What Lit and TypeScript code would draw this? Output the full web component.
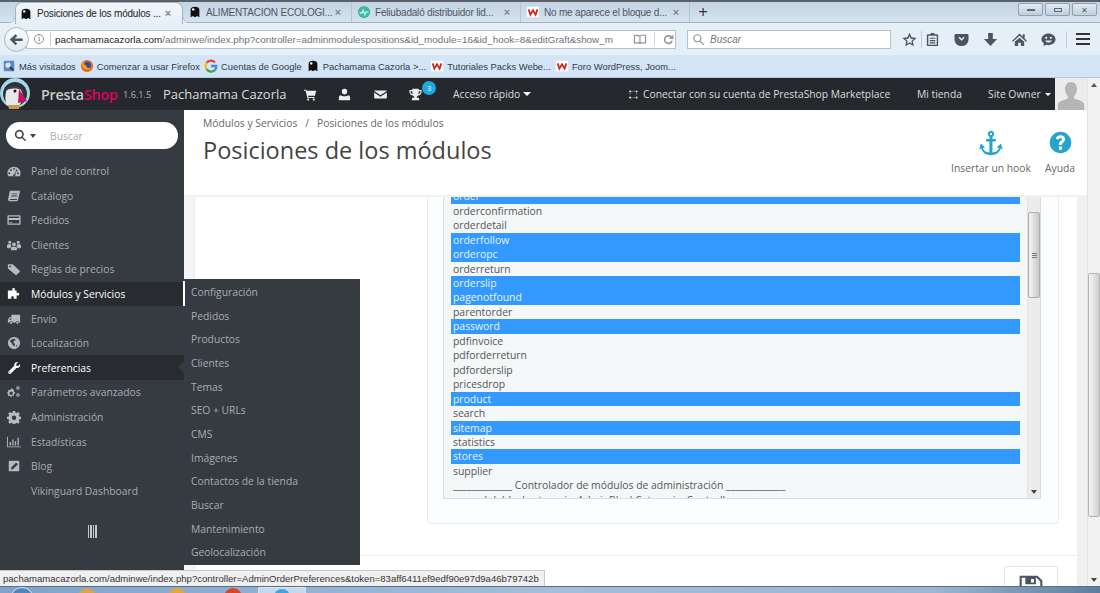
import { LitElement, html, css, svg } from "lit";
import { customElement } from "lit/decorators.js";

const ic = (d: string, s = 14, cls = "") =>
  html`<svg class=${cls} width=${s} height=${s} viewBox="0 0 16 16" fill="currentColor" fill-rule="evenodd"><path d=${d}></path></svg>`;

const P: Record<string, string> = {
  dash: "M8 3a7.5 7.5 0 0 0-7.5 7.500c0 1.500.4 2.700 1.100 3.500h12.800c.7-.8 1.100-2 1.100-3.500A7.500 7.500 0 0 0 8 3zM3.500 10.500a1 1 0 1 1 0-.1zM5.500 7a1 1 0 1 1 0-.1zM9 5.500a1 1 0 1 1 0-.1zM12 7.500a1 1 0 1 1 0-.1zM13.500 10.500a1 1 0 1 1 0-.1zM7 12.500a1.300 1.300 0 1 0 2.500 0l.8-4.500-2 3.800-1.300.7z",
  book: "M4 2h10c.7 0 1 .5.8 1.200l-2.300 9.300c-.2.8-.7 1.500-1.700 1.500H3c-1.300 0-2-1-1.700-2.200L3 3c.1-.6.5-1 1-1zM5.500 5l-.3 1h6.500l.3-1zM5 7.500l-.3 1h6.500l.3-1zM3.500 11.500c-.3.8 0 1.200.5 1.200h6.700c.3 0 .5-.2.6-.5l.1-.7z",
  card: "M1.500 2.500h13c.6 0 1 .4 1 1v9c0 .6-.4 1-1 1h-13c-.6 0-1-.4-1-1v-9c0-.6.4-1 1-1zM2 4v1.800h12V4zM2 8v4h12V8zM3 10.500h3v.8H3z",
  users: "M8 5a2.200 2.200 0 1 1 0 4.400A2.200 2.200 0 0 1 8 5zM3.200 3a1.800 1.800 0 1 1 0 3.600 1.800 1.800 0 0 1 0-3.600zM12.800 3a1.800 1.800 0 1 1 0 3.600 1.800 1.800 0 0 1 0-3.600zM0 8.500C0 7.500 1 7 3.200 7c.5 0 1 .1 1.300.2-.2 1 .2 2 .9 2.500-1 .4-1.500 1-1.700 2H1c-.6 0-1-.4-1-1zM16 8.500c0-1-1-1.500-3.200-1.500-.5 0-1 .1-1.300.2.2 1-.2 2-.9 2.500 1 .4 1.500 1 1.700 2H15c.6 0 1-.4 1-1zM4.500 12c0-1.300 1-2 3.500-2s3.500.7 3.500 2v1.200c0 .5-.3.800-.8.800H5.300c-.5 0-.8-.3-.8-.8z",
  tag: "M1 2.500h5.500l8 7.500c.5.5.5 1 0 1.500l-3.500 3c-.5.5-1 .5-1.500 0L1 7.500zM3.500 4a1 1 0 1 0 0 2 1 1 0 0 0 0-2z",
  puzzle: "M6 2.500c0-1 .7-1.500 1.500-1.500S9 1.500 9 2.500c0 .6-.3 1-.3 1.500H11v3c.5 0 .9-.3 1.500-.3 1 0 1.500.7 1.500 1.500s-.5 1.500-1.500 1.500c-.6 0-1-.3-1.500-.3v4.100H7.500c0-.5.3-.9.3-1.500 0-.9-.7-1.500-1.500-1.500s-1.500.6-1.500 1.500c0 .6.3 1 .3 1.500H1V4h5.300c0-.5-.3-.9-.3-1.500z",
  truck: "M5 3h10v9h-1.200a2 2 0 0 0-3.900 0H6.800a2 2 0 0 0-3.900 0H1V8.500L3 6h2zM3.800 7.300 2.500 8.800H5V7.300zM4.900 11a1.300 1.300 0 1 1 0 2.600 1.300 1.300 0 0 1 0-2.600zM11.900 11a1.300 1.300 0 1 1 0 2.600 1.300 1.300 0 0 1 0-2.600z",
  globe: "M8 1a7 7 0 1 1 0 14A7 7 0 0 1 8 1zM5 4c-.8.5-1.500 1.500-1.500 2.500l2 1.500 1 2.500L8.500 12l.5-3-2-2 1.500-1.500L10 4.500 8.500 3zM11 10l-1 2.500 2-1.500z",
  wrench: "M15 4.500c0 2.200-2 4-4.300 3.400L4.500 14.300c-.8.8-1.900.8-2.600.1-.8-.8-.7-1.900.1-2.700l6.300-6.200C7.700 3 9.500 1 11.700 1c.5 0 .8.100 1.100.2L10.500 3.500l.5 1.800 1.800.5 2-2.300c.1.300.2.600.2 1zM3.200 12.200a.6.600 0 1 0 0 1.200.6.600 0 0 0 0-1.200z",
  cogs: "M5.200 4l1 .1.400 1.200 1-.1.700.9-.6.900.6 1.100 1 .2v1.200l-1.100.3-.5 1 .5 1-.8.800-1-.5-1 .4-.3 1.100H4l-.3-1.100-1-.4-1 .5-.8-.8.500-1-.5-1L0 9.900V8.700l1-.2.500-1.100-.5-1 .8-.8 1 .5 1-.4.300-1zM4.700 7.300a2 2 0 1 0 0 4 2 2 0 0 0 0-4zM12.500 1.500a2 2 0 1 1 0 4 2 2 0 0 1 0-4zM12.500 2.700a.8.800 0 1 0 0 1.600.8.800 0 0 0 0-1.600zM12.500 9.500a2 2 0 1 1 0 4 2 2 0 0 1 0-4zM12.500 10.700a.8.800 0 1 0 0 1.600.8.800 0 0 0 0-1.600z",
  cog: "M6.700 1h2.600l.4 2 1.300.5L12.800 2.400l1.800 1.800-1.100 1.800.5 1.300 2 .4v2.600l-2 .4-.5 1.300 1.100 1.800-1.800 1.800-1.800-1.100-1.300.5-.4 2H6.700l-.4-2-1.300-.5-1.800 1.100-1.800-1.800 1.100-1.800-.5-1.300-2-.4V7.700l2-.4.500-1.300-1.100-1.800 1.800-1.800 1.800 1.100L6.300 3zM8 6.300a2.500 2.500 0 1 0 0 5 2.500 2.500 0 0 0 0-5z",
  chart: "M0 2h1v11h15v1H0zM3 8h1.500v4H3zM6 5h1.500v7H6zM9 7h1.500v5H9zM12 3h1.500v9H12z",
  edit: "M3 2h10c.6 0 1 .4 1 1v10c0 .6-.4 1-1 1H3c-.6 0-1-.4-1-1V3c0-.6.4-1 1-1zM10.500 4 5 9.500 4.500 12l2.500-.5L12.500 6z",
  cart: "M0 2h2.800l.5 1.500H15l-1.500 6H5l.4 1.500H13v1.300H4.200L2 3.300H0zM5 13a1.300 1.300 0 1 1 0 2.600A1.300 1.300 0 0 1 5 13zM12 13a1.300 1.300 0 1 1 0 2.600 1.300 1.300 0 0 1 0-2.600z",
  user: "M8 1a3.300 3.300 0 0 1 3.300 3.500c0 1.800-1.300 3.500-3.300 3.500S4.700 6.300 4.700 4.500A3.300 3.300 0 0 1 8 1zM3 9c1 0 1.700 1.300 5 1.300S12 9 13 9c1.200 0 2 2 2 4.500 0 .9-.6 1.500-1.500 1.500h-11C1.600 15 1 14.400 1 13.500 1 11 1.800 9 3 9z",
  mail: "M1 3h14c.5 0 .8.300.8.800L8 9 .2 3.800C.2 3.300.5 3 1 3zM.2 5.500 8 10.700l7.800-5.200V12c0 .6-.4 1-1 1H1.200c-.6 0-1-.4-1-1z",
  trophy: "M4 1h8v1.500h3.500V5c0 2.500-2 4-4.300 4.300-.5.700-1.200 1.200-1.700 1.400V12h1.500c1 0 1.500.7 1.500 1.500V15H3.500v-1.500c0-1 .7-1.500 1.500-1.500h1.500v-1.300c-.5-.2-1.200-.7-1.700-1.400C2.500 9 .5 7.500.5 5V2.500H4zM2 4v1c0 1.200.8 2.200 2.500 2.700C4.200 6.600 4 5.300 4 4zM14 4h-2c0 1.300-.2 2.600-.5 3.700C13.200 7.200 14 6.200 14 5z",
  search: "M6.500 1a5.500 5.500 0 0 1 4.400 8.800l4 4-1.200 1.200-4-4A5.500 5.500 0 1 1 6.500 1zM6.500 3a3.500 3.500 0 1 0 0 7 3.500 3.500 0 0 0 0-7z",
  star: "M8 .8l2.200 4.900 5.300.6-4 3.600 1.100 5.300L8 12.500l-4.600 2.700 1.100-5.300-4-3.600 5.300-.6zM8 4.300 6.800 7.200l-3 .3 2.200 2-.6 3L8 11l2.600 1.500-.6-3 2.200-2-3-.3z",
  clip: "M6 1h4v1.500h3c.6 0 1 .4 1 1V14c0 .6-.4 1-1 1H3c-.6 0-1-.4-1-1V3.500c0-.6.4-1 1-1h3zM3.500 4v9.500h9V4zM5 6h6v1.300H5zM5 8.500h6v1.300H5zM5 11h6v1.300H5z",
  pocket: "M2 2h12c.8 0 1.500.7 1.500 1.500V8A7.500 7 0 0 1 .5 8V3.500C.5 2.700 1.200 2 2 2zM4.800 6 8 9.200 11.200 6l-1-1L8 7.200 5.800 5z",
  down: "M5.500 1h5v6.500H15L8 15 1 7.500h4.500z",
  home: "M8 1.500 11.500 5V2.500h2v4.500L16 9.500l-1 1-7-6.500-7 6.500-1-1zM3 10.500 8 6l5 4.500V15H9.500v-3.500h-3V15H3z",
  smile: "M8 1.500c4 0 7.500 2.800 7.500 6.300s-3.500 6.200-7.500 6.200c-.7 0-1.500-.1-2-.3L2.500 15l.7-2.700C1.500 11.200.5 9.600.5 7.800.5 4.300 4 1.500 8 1.500zM5.500 5a1.200 1.200 0 1 0 0 2.400 1.200 1.200 0 0 0 0-2.400zM10.500 5a1.200 1.200 0 1 0 0 2.400 1.200 1.200 0 0 0 0-2.400zM4.500 9c.7 1.500 2 2.300 3.500 2.300s2.800-.8 3.500-2.300z",
  anchor: "M8 .5a2 2 0 0 1 .9 3.800V5.500H11v1.500H8.900v6.800c2-.2 3.500-1.200 4-2.800l-1.400-.4 2.700-2.300.9 3.500-1.100-.4C13.200 14 11 15.500 8 15.500S2.800 14 1.900 11.400l-1.100.4.9-3.500 2.700 2.300-1.400.4c.5 1.600 2 2.600 4 2.800V7H5V5.500h2.100V4.300A2 2 0 0 1 8 .5zM8 1.800a.7.700 0 1 0 0 1.400.7.700 0 0 0 0-1.400z",
  help: "M8 .5a7.500 7.500 0 1 1 0 15 7.500 7.500 0 0 1 0-15zM8 3C6.200 3 5 4 4.800 5.500l2 .4C7 5.200 7.400 4.800 8 4.800s1 .4 1 .9c0 .5-.4.8-1 1.300-.8.600-1.100 1.200-1.100 2v.7H9v-.5c0-.4.2-.6.800-1.100C10.600 7.400 11.200 6.800 11.200 5.600 11.200 4 9.800 3 8 3zM6.900 10.800V13H9v-2.200z",
  back: "M7 2.500 8.800 4.300 6 7h8.500v2.500H6l2.800 2.700L7 14 .8 8z",
  reload: "M8 2.500c1.500 0 2.900.6 3.900 1.600L14 2v5.500H8.500l2-2C9.800 4.800 9 4.400 8 4.400a3.700 3.700 0 1 0 3.500 4.900l1.800.6A5.600 5.600 0 1 1 8 2.500z",
  reader: "M1 3h5.500L8 4l1.500-1H15v10H9.500L8 14l-1.500-1H1zM2.300 4.300v7.400h5V5zM13.700 4.300H9.200l-.6.700v6.700h5.100z",
  magn: "M6.500 1.500a5 5 0 0 1 4 8l4.500 4.500-1 1-4.500-4.500a5 5 0 1 1-3-9zM6.500 2.800a3.700 3.700 0 1 0 0 7.400 3.700 3.700 0 0 0 0-7.400z",
  plug: "M3 5a1.500 1.500 0 1 1 0-3 1.500 1.500 0 0 1 0 3zM12.500 5a1.500 1.500 0 1 1 0-3 1.500 1.500 0 0 1 0 3zM3 14a1.500 1.500 0 1 1 0-3 1.500 1.500 0 0 1 0 3zM12.500 14a1.500 1.500 0 1 1 0-3 1.500 1.500 0 0 1 0 3zM5 3h1.500v1H5zM8 2.500h1.500v1H8zM2.500 6.500h1V8h-1zM12 6.500h1V8h-1zM5 12.500h1.500v1H5zM8.500 12h1.500v1H8.500z",
  disk: "M1 1h11l3 3v11H1zM2.300 2.300v11.400h11.400V4.600l-2.300-2.300H11v4H4.500v-4zM8 3v2.300h1.800V3zM4 9.500h8v4H4z",
  prsn: "M8 1c2 0 3.200 1.500 3.200 3.800 0 1.800-.7 3-1.500 3.700v1.300c1 .6 5.300 1.200 5.300 3.200v3H1v-3c0-2 4.300-2.600 5.300-3.200V8.500C5.500 7.800 4.800 6.600 4.800 4.800 4.800 2.500 6 1 8 1z",
};

const pf = svg`<path d="M3 14V5.500C3 3 5 2 8 2s5 1 5 3.500V14l-2.500-1.500L8 14l-2.500-1.500z" fill="#111"/><circle cx="6" cy="5" r="1.400" fill="#fff"/>`;
const fav = (k: string) => {
  if (k === "ps") return html`<svg width="14" height="16" viewBox="0 0 16 16">${pf}</svg>`;
  if (k === "w") return html`<svg width="14" height="16" viewBox="0 0 16 16"><rect x="1" y="2" width="14" height="12" fill="#fff"/><path d="M3 5l2 6 3-5 3 5 2-6" fill="none" stroke="#d3261c" stroke-width="2"/></svg>`;
  if (k === "fe") return html`<svg width="14" height="16" viewBox="0 0 16 16"><circle cx="8" cy="8" r="7" fill="#3bb8a6"/><path d="M3 9h3l1-3 2 5 1-3h3" fill="none" stroke="#dff" stroke-width="1.200"/></svg>`;
  if (k === "fx") return html`<svg width="14" height="16" viewBox="0 0 16 16"><circle cx="8" cy="8" r="7" fill="#e66a1f"/><circle cx="8.500" cy="7" r="3.800" fill="#2c4f9e"/><path d="M2 6c1 5 6 8 11 4-3 1-6 0-6-3-2 0-3-1-2-4C3 4 2 5 2 6z" fill="#f6a31c"/></svg>`;
  if (k === "g") return html`<svg width="14" height="16" viewBox="0 0 16 16" fill="none" stroke-width="2.600"><path d="M12.500 4A6 6 0 0 0 3 4.500" stroke="#ea4335"/><path d="M3 4.500a6 6 0 0 0 0 7" stroke="#fbbc05"/><path d="M3 11.500a6 6 0 0 0 9.500 1" stroke="#34a853"/><path d="M8 8h6a6 6 0 0 1-1.500 4.500" stroke="#4285f4"/></svg>`;
  return html`<svg width="14" height="16" viewBox="0 0 16 16"><rect x="2" y="2" width="12" height="12" rx="1" fill="#5b87c5"/><circle cx="7" cy="7" r="3" fill="#dce8f7"/><path d="M9 9l4 4" stroke="#233" stroke-width="2"/></svg>`;
};

const MENU: [string, string, string?][] = [
  ["dash", "Panel de control"], ["book", "Catálogo"], ["card", "Pedidos"], ["users", "Clientes"],
  ["tag", "Reglas de precios"], ["puzzle", "Módulos y Servicios", "on"], ["truck", "Envío"],
  ["globe", "Localización"], ["wrench", "Preferencias", "on cur"], ["cogs", "Parámetros avanzados"],
  ["cog", "Administración"], ["chart", "Estadísticas"], ["edit", "Blog"], ["", "Vikinguard Dashboard"],
];
const SUB = ["Configuración", "Pedidos", "Productos", "Clientes", "Temas", "SEO + URLs", "CMS", "Imágenes", "Contactos de la tienda", "Buscar", "Mantenimiento", "Geolocalización"];
const HOOKS: [string, boolean][] = [
  ["order", true], ["orderconfirmation", false], ["orderdetail", false], ["orderfollow", true], ["orderopc", true],
  ["orderreturn", false], ["orderslip", true], ["pagenotfound", true], ["parentorder", false], ["password", true],
  ["pdfinvoice", false], ["pdforderreturn", false], ["pdforderslip", false], ["pricesdrop", false], ["product", true],
  ["search", false], ["sitemap", true], ["statistics", false], ["stores", true], ["supplier", false],
  ["_____________ Controlador de módulos de administración _____________", false],
];
const TABS: [string, string, boolean][] = [
  ["ps", "Posiciones de los módulos ...", true],
  ["ps", "ALIMENTACIÓN ECOLÓGI...", false],
  ["fe", "Feliubadaló distribuidor lid...", false],
  ["w", "No me aparece el bloque d...", false],
];
const BOOK: [string, string][] = [
  ["mv", "Más visitados"], ["fx", "Comenzar a usar Firefox"], ["g", "Cuentas de Google"],
  ["ps", "Pachamama Cazorla >..."], ["w", "Tutoriales Packs Webe..."], ["w", "Foro WordPress, Joom..."],
];

@customElement("app-root")
export class AppRoot extends LitElement {
  static styles = css`
    :host { display: block; width: 1100px; height: 593px; overflow: hidden; position: relative; font-family: "Open Sans", "Noto Sans", sans-serif; font-size: 10.300px; color: #555; }
    * { box-sizing: border-box; }
    svg { display: block; flex: none; }
    .root { display: flex; flex-direction: column; height: 593px; }

    .tabs { height: 23px; flex: none; display: flex; align-items: stretch; padding-left: 15px; border-top: 2px solid #5c6067; border-bottom: 1px solid #a3b3c4; background: linear-gradient(#c3d3e3, #d6e3f0); position: relative; }
    .tab { width: 169px; display: flex; align-items: center; padding-left: 5px; color: #4d5660; position: relative; }
    .tab .fav { margin-right: 4px; }
    .tab .t { flex: 1; min-width: 0; white-space: nowrap; overflow: hidden; font-family: "Liberation Sans", sans-serif; font-size: 10px; letter-spacing: -.2px; }
    .tab .x { font: 700 11px/1 "Liberation Sans", sans-serif; color: #7d8790; margin-right: 8px; width: 10px; text-align: center; flex: none; }
    .tab.sep { border-right: 1px solid #b5c4d3; }
    .tab.active { width: 168px; color: #222; height: 22px; background: linear-gradient(#f2f6fa, #e6eff8); border-radius: 7px 7px 0 0; border: 1px solid #a3b3c4; border-bottom: 0; padding-left: 3px; }
    .tab.active::before, .tab.active::after { content: ""; position: absolute; bottom: 1px; width: 7px; height: 7px; }
    .tab.active::before { left: -8px; background: radial-gradient(circle at 0 0, transparent 6.500px, #a3b3c4 7px, #e6eff8 7.500px); }
    .tab.active::after { right: -8px; background: radial-gradient(circle at 100% 0, transparent 6.500px, #a3b3c4 7px, #e6eff8 7.500px); }
    .tab.active .x { margin-right: 9px; }
    .plus { font-size: 17px; color: #333; width: 26px; text-align: center; line-height: 20px; }
    .win { margin-left: auto; display: flex; gap: 2px; padding: 1px 3px 0 0; height: 15px; }
    .win span { width: 25px; height: 13px; border: 1px solid #8fa0b2; border-radius: 2px; background: linear-gradient(#e2eaf2, #c0cfdd); display: flex; align-items: center; justify-content: center; color: #555; }
    .win i { display: block; width: 8px; height: 4px; border: 1px solid #666; }
    .win i.min { height: 2px; }

    .nav { height: 32px; flex: none; background: #e5eff8; display: flex; align-items: center; padding-left: 4px; color: #3d4a57; }
    .backb { width: 25px; height: 25px; border-radius: 50%; border: 1px solid #a9b6c3; background: linear-gradient(#fbfdff, #dfe8f0); display: flex; align-items: center; justify-content: center; color: #4a5560; margin-right: -3px; position: relative; }
    .url { width: 650px; height: 19px; background: #fff; border: 1px solid #b4c2d0; display: flex; align-items: center; padding-left: 7px; white-space: nowrap; overflow: hidden; font-size: 9.850px; font-family: "Liberation Sans", sans-serif; color: #6b7178; }
    .info { width: 10px; height: 10px; border-radius: 50%; border: 1px solid #8b939b; font: 8px/8px "Liberation Serif", serif; text-align: center; color: #666; margin-right: 6px; flex: none; }
    .urlsep { width: 1px; height: 14px; background: #c5ccd4; flex: none; margin-right: 4px; }
    .urltxt { width: 578px; overflow: hidden; flex: none; }
    .urltxt b { font-weight: 400; color: #222; }
    .urlic { color: #8a939c; display: flex; align-items: center; gap: 7px; }
    .urlic i { display: block; width: 1px; height: 14px; background: #ccd3da; }
    .sbox { width: 204px; height: 19px; margin-left: 11px; background: #fff; border: 1px solid #b4c2d0; display: flex; align-items: center; gap: 5px; padding-left: 4px; color: #777; font-style: italic; font-size: 10px; font-family: "Liberation Sans", sans-serif; }
    .sbox svg { color: #888; }
    .tools { display: flex; align-items: center; margin-left: 10.500px; color: #4a5560; }
    .tools svg { margin-right: 14px; }
    .tools .s svg { margin-right: 4.500px; }
    .tools i { display: block; width: 1px; height: 17px; background: #c3ced9; flex: none; }
    .tools .g1 { margin-right: 3px; }
    .tools .g2 { margin: 0 9px 0 -4.500px; }
    .tools .b { width: 14px; height: 12px; border-top: 2px solid #333; border-bottom: 2px solid #333; position: relative; flex: none; }
    .tools .b::after { content: ""; position: absolute; left: 0; right: 0; top: 3px; height: 2px; background: #333; }

    .books { height: 23px; flex: none; background: #d2e4f6; display: flex; align-items: center; padding-left: 2px; gap: 4px; border-bottom: 1px solid #b9cadb; font-family: "Liberation Sans", sans-serif; font-size: 9.400px; color: #2f3b47; white-space: nowrap; }
    .bk { display: flex; align-items: center; gap: 3px; }

    .below { flex: 1; min-height: 0; display: flex; position: relative; }
    .page { flex: 1; min-width: 0; display: flex; flex-direction: column; }
    .pscroll { width: 13px; flex: none; background: #f1f1f1; display: flex; flex-direction: column; align-items: center; border-left: 1px solid #e3e3e3; }
    .pscroll .spacer { height: 186px; flex: none; }
    .pscroll .thumb { width: 12px; height: 244px; background: linear-gradient(90deg, #f5f5f5, #cfcfcf); border: 1px solid #b3b3b3; border-radius: 2px; flex: none; }
    .arr { width: 0; height: 0; border-left: 3px solid transparent; border-right: 3px solid transparent; flex: none; }
    .arr.u { border-bottom: 4px solid #555; margin-top: 5px; }
    .arr.d { border-top: 4px solid #444; margin-top: auto; margin-bottom: 4px; }

    .top { height: 32px; flex: none; background: #25282d; display: flex; align-items: center; color: #ddd; white-space: nowrap; }
    .logo { width: 32px; flex: none; }
    .brand { margin-left: 9px; width: 82px; font-size: 14.300px; font-weight: 600; color: #ccc; letter-spacing: -.2px; flex: none; }
    .brand b { color: #df0067; font-weight: 600; }
    .ver { width: 40px; font-size: 9.200px; color: #b8b8b8; flex: none; }
    .shop { font-size: 13px; width: 140.500px; color: #ddd; flex: none; }
    .tico { color: #eee; flex: none; }
    .g21 { width: 21px; flex: none; }
    .g23 { width: 23px; flex: none; }
    .g22 { width: 22px; flex: none; }
    .tr { position: relative; }
    .badge { position: absolute; left: 13.500px; top: -7px; width: 14px; height: 14px; border-radius: 50%; color: #fff; font-size: 8px; line-height: 14px; text-align: center; background: #1ea7e0; }
    .qa { margin-left: 31.500px; width: 174.500px; flex: none; display: flex; align-items: center; gap: 3px; }
    .car { width: 0; height: 0; border-left: 4px solid transparent; border-right: 4px solid transparent; border-top: 4px solid #fff; }
    .mp { display: flex; align-items: center; gap: 4.500px; width: 289.500px; flex: none; }
    .mi { width: 71px; flex: none; }
    .so { display: flex; align-items: center; gap: 4px; width: 67px; flex: none; }
    .so .car { border-width: 3px; margin-top: 1px; }
    .ava { width: 32px; height: 32px; background: #ececec; color: #b5b5b5; flex: none; overflow: hidden; display: flex; justify-content: center; align-items: flex-end; }

    .body { flex: 1; min-height: 0; display: flex; }
    .side { width: 184px; flex: none; background: #363a41; position: relative; color: #a7adb3; }
    .find { margin: 12px 6px 9.700px; height: 27px; border-radius: 14px; background: #fff; display: flex; align-items: center; padding-left: 8px; color: #aaa; }
    .find svg { color: #444; }
    .find .c { width: 0; height: 0; border-left: 3.500px solid transparent; border-right: 3.500px solid transparent; border-top: 4px solid #444; margin: 0 14px 0 3px; }
    .mi2 { height: 24.600px; display: flex; align-items: center; position: relative; }
    .mi2 .i { width: 31px; flex: none; display: flex; justify-content: center; padding-right: 3px; color: #b6bbc0; }
    .mi2.on { background: #282b30; color: #fff; }
    .mi2.on .i { color: #fff; }
    .mi2.cur::after { content: ""; position: absolute; right: 0; top: 6px; border: 6px solid transparent; border-right-color: #363a41; border-left-width: 0; }
    .coll { display: flex; justify-content: center; gap: 1px; margin-top: 21.500px; }
    .coll i { display: block; width: 1.500px; height: 13px; background: #c4c7ca; }
    .sub { position: absolute; left: 184px; top: 169px; width: 176px; height: 286px; background: #363a41; z-index: 3; padding-top: 1px; color: #a7adb3; }
    .sub div { height: 23.700px; display: flex; align-items: center; padding-left: 7px; }
    .sub::before { content: ""; position: absolute; left: -1px; top: 2px; width: 2px; height: 25px; background: #fff; }

    .content { flex: 1; min-width: 0; background: #fff; display: flex; flex-direction: column; }
    .phead { height: 87px; flex: none; display: flex; border-bottom: 2px solid #f1f1f1; padding: 7px 0 0 19px; color: #555; position: relative; }
    .ptxt { flex: 1; }
    .crumb { line-height: 13px; color: #666; display: flex; gap: 8px; }
    .ptxt h1 { margin: 4px 0 0; font-weight: 400; font-size: 23.500px; line-height: 32px; color: #444; }
    .act { display: flex; flex-direction: column; align-items: center; gap: 5px; padding-top: 13px; color: #666; }
    .act svg { color: #25a5cc; }
    .act.a1 { width: 90px; margin-right: 5px; }
    .act.a2 { width: 38px; margin-right: 8px; }
    .act.a2 svg { margin: 1px 0 2px; }
    .wrap { flex: 1; min-height: 0; display: flex; flex-direction: column; border-left: 10px solid #f5f5f5; border-right: 10px solid #f0f0f0; box-shadow: inset 1px 0 0 #ebebeb; }
    .panel { height: 327px; flex: none; margin-left: 233px; width: 632px; background: #fbfdfe; border: 1px solid #e3edf4; border-top: 0; border-radius: 0 0 4px 4px; padding: 0 17px 24px 15px; }
    .sel { height: 302px; background: #f4f7f8; border: 1px solid #d8dde1; border-top: 0; display: flex; overflow: hidden; }
    .list { flex: 1; min-width: 0; padding: 0 7px; overflow: hidden; }
    .list div { height: 14.460px; line-height: 14.460px; padding-left: 2px; white-space: nowrap; color: #555; font-size: 10.400px; }
    .list div:first-child { margin-top: -7.700px; }
    .list .on { background: #3399ff; color: #e6f3ff; }
    .list .ind { padding-left: 14px; }
    .vbar { width: 13px; flex: none; background: #ececec; display: flex; flex-direction: column; align-items: center; border-left: 1px solid #e2e2e2; padding-top: 15px; }
    .vbar .th { width: 12px; height: 86px; flex: none; border: 1px solid #aeaeae; border-radius: 2px; background: linear-gradient(90deg, #f4f4f4, #c9c9c9); display: flex; flex-direction: column; justify-content: center; align-items: center; gap: 1px; }
    .vbar .th i { display: block; width: 5px; height: 1px; background: #777; }
    .foot { flex: 1; margin-top: 31px; border-top: 1px solid #efefef; display: flex; justify-content: flex-end; padding: 10px 19px 0 0; }
    .save { width: 54px; height: 40px; border: 1px solid #e4e4e4; border-radius: 3px; background: #fff; display: flex; justify-content: center; padding-top: 7px; color: #4b5560; flex: none; }

    .status { position: absolute; left: 0; top: 492px; width: 545px; height: 17px; background: #f0f0f0; border: 1px solid #c9c9c9; border-left: 0; line-height: 15px; padding-left: 3px; font-size: 9.550px; font-family: "Liberation Sans", sans-serif; color: #333; white-space: nowrap; overflow: hidden; z-index: 5; }

    .task { height: 7px; flex: none; background: linear-gradient(90deg, #7fa3c9 0%, #a3bedc 50%, #9ab6d4 85%, #5d7c9c 100%); border-top: 1px solid #5a6d82; display: flex; overflow: hidden; position: relative; z-index: 6; }
    .orb { width: 24px; height: 24px; border-radius: 50%; background: #4f86bd; border: 1px solid #dfe9f3; margin: 0 0 0 10px; flex: none; }
    .tb { width: 18px; height: 18px; border-radius: 50%; flex: none; margin-top: 1px; }
    .tb.a { background: #d9a44e; margin-left: 44px; }
    .tb.b { background: #e0a83c; margin-left: 72px; }
    .tb.c { background: #d8462a; margin-left: 38px; }
    .tbtn { width: 48px; margin-left: 16px; border: 1px solid #dfe8f1; border-bottom: 0; border-radius: 2px 2px 0 0; background: #c6d9ec; display: flex; justify-content: center; flex: none; }
    .tbtn i { display: block; width: 16px; height: 16px; border-radius: 50%; background: #36a9e1; margin-top: 1px; }
  `;

  render() {
    return html`<div class="root">
      <div class="tabs">
        ${TABS.map(([f, t, a], i) => html`<div class="tab ${a ? "active" : i ? "sep" : ""}">
          <span class="fav">${fav(f)}</span><span class="t">${t}</span><span class="x">×</span></div>`)}
        <div class="plus">+</div>
        <div class="win"><span><i class="min"></i></span><span><i></i></span><span>×</span></div>
      </div>

      <div class="nav">
        <div class="backb">${ic(P.back, 15)}</div>
        <div class="url"><span class="info">i</span><span class="urlsep"></span>
          <span class="urltxt"><b>pachamamacazorla.com</b>/adminwe/index.php?controller=adminmodulespositions&amp;id_module=16&amp;id_hook=8&amp;editGraft&amp;show_m</span>
          <span class="urlic">${ic(P.reader, 14)}<i></i>${ic(P.reload, 13)}</span>
        </div>
        <div class="sbox">${ic(P.magn, 13)}<span>Buscar</span></div>
        <div class="tools">
          <span class="s">${ic(P.star, 15)}</span><i class="g1"></i>
          ${ic(P.clip, 15)}${ic(P.pocket, 15)}${ic(P.down, 15)}${ic(P.home, 15)}${ic(P.smile, 15)}<i class="g2"></i><span class="b"></span>
        </div>
      </div>

      <div class="books">
        ${BOOK.map(([f, t]) => html`<div class="bk">${fav(f)}<span>${t}</span></div>`)}
      </div>

      <div class="below">
        <div class="page">
          <div class="top">
            <div class="logo"><svg width="32" height="32" viewBox="0 0 32 32">
              <circle cx="15" cy="15" r="15" fill="#a7d8ea"/>
              <circle cx="15" cy="16" r="12" fill="#2e3238"/>
              <path d="M6 14c1-6 12-7 15-2 3 5 2 11-2 16H8C5 24 5 19 6 14z" fill="#e8e8e8"/>
              <path d="M6 13c2-6 12-7 15-1-5-2-11-2-15 1z" fill="#3c4046"/>
              <circle cx="15" cy="13" r="1.500" fill="#111"/>
              <path d="M19 11l8 12-9 2z" fill="#c4145c"/>
              <path d="M8 27h12l-1 4H9z" fill="#c89a4b"/>
            </svg></div>
            <div class="brand">Presta<b>Shop</b></div>
            <div class="ver">1.6.1.5</div>
            <div class="shop">Pachamama Cazorla</div>
            ${ic(P.cart, 13, "tico")}<span class="g21"></span>${ic(P.user, 13, "tico")}<span class="g23"></span>${ic(P.mail, 13, "tico")}<span class="g22"></span>
            <div class="tr">${ic(P.trophy, 13, "tico")}<span class="badge">3</span></div>
            <div class="qa"><span>Acceso rápido</span><span class="car"></span></div>
            <div class="mp">${ic(P.plug, 11)}<span>Conectar con su cuenta de PrestaShop Marketplace</span></div>
            <div class="mi">Mi tienda</div>
            <div class="so"><span>Site Owner</span><span class="car"></span></div>
            <div class="ava">${ic(P.prsn, 30)}</div>
          </div>
          <div class="body">
            <div class="side">
              <div class="find">${ic(P.search, 13)}<span class="c"></span><span>Buscar</span></div>
              ${MENU.map(([k, t, c]) => html`<div class="mi2 ${c || ""}"><span class="i">${k ? ic(P[k], 14) : ""}</span><span>${t}</span></div>`)}
              <div class="coll"><i></i><i></i><i></i><i></i></div>
              <div class="sub">${SUB.map((s) => html`<div>${s}</div>`)}</div>
            </div>
            <div class="content">
              <div class="phead">
                <div class="ptxt">
                  <div class="crumb"><span>Módulos y Servicios</span><span>/</span><span>Posiciones de los módulos</span></div>
                  <h1>Posiciones de los módulos</h1>
                </div>
                <div class="act a1">${ic(P.anchor, 26)}<span>Insertar un hook</span></div>
                <div class="act a2">${ic(P.help, 23)}<span>Ayuda</span></div>
              </div>
              <div class="wrap">
                <div class="panel">
                  <div class="sel">
                    <div class="list">
                      ${HOOKS.map(([t, on]) => html`<div class=${on ? "on" : ""}>${t}</div>`)}
                      <div class="ind">moduleblockcategoriesAdminBlockCategoriesController</div>
                    </div>
                    <div class="vbar"><div class="th"><i></i><i></i><i></i></div><span class="arr d"></span></div>
                  </div>
                </div>
                <div class="foot"><div class="save">${ic(P.disk, 26)}</div></div>
              </div>
            </div>
          </div>
        </div>
        <div class="pscroll"><span class="arr u"></span><div class="spacer"></div><div class="thumb"></div><span class="arr d"></span></div>
        <div class="status">pachamamacazorla.com/adminwe/index.php?controller=AdminOrderPreferences&amp;token=83aff6411ef9edf90e97d9a46b79742b</div>
      </div>

      <div class="task"><div class="orb"></div><div class="tb a"></div><div class="tb b"></div><div class="tb c"></div><div class="tbtn"><i></i></div></div>
    </div>`;
  }
}
